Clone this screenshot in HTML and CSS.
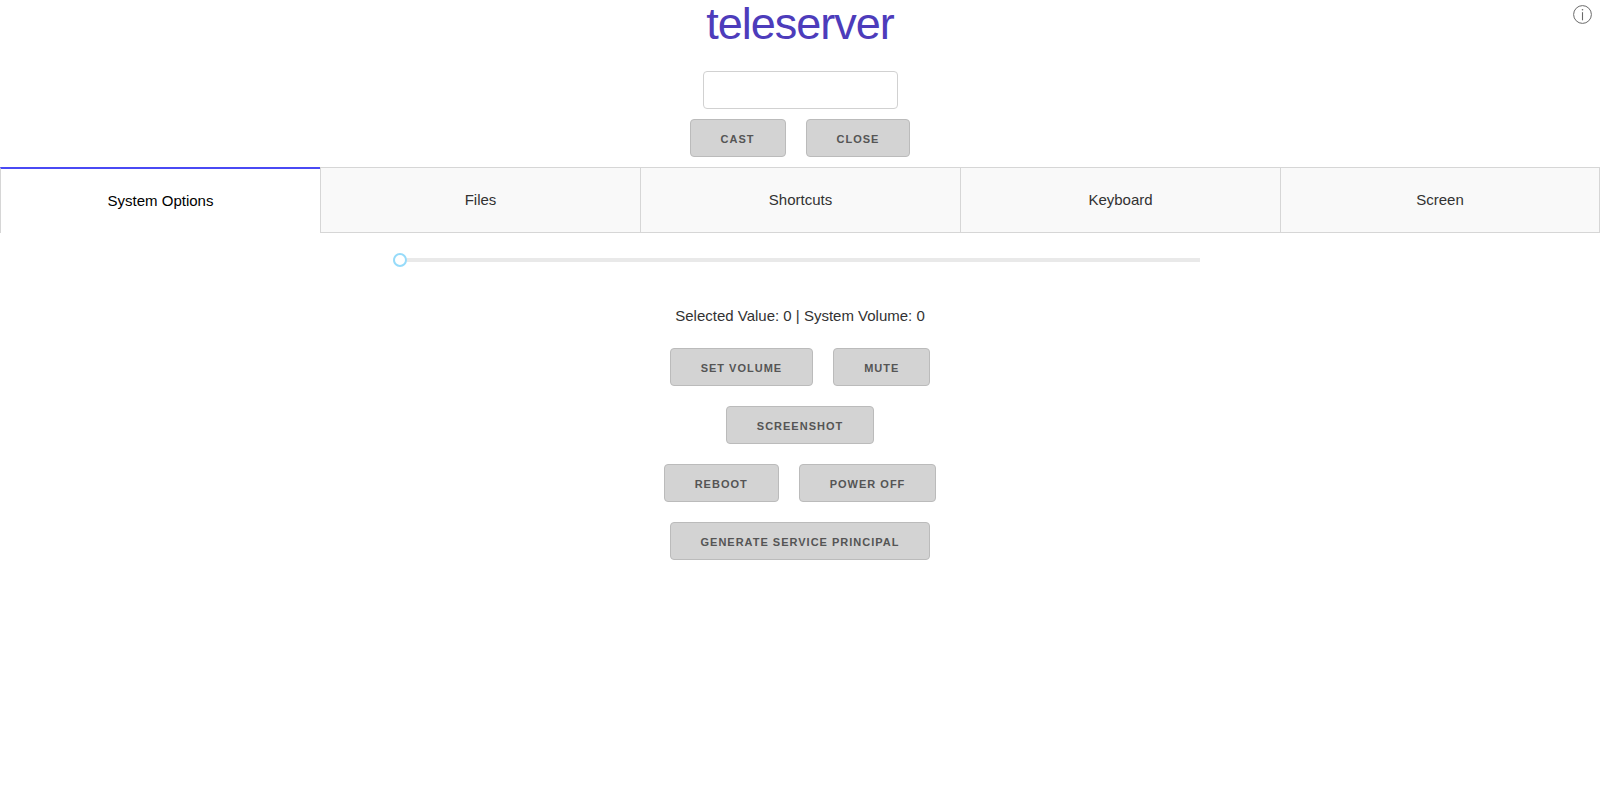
FILE: index.html
```html
<!DOCTYPE html>
<html lang="en">
<head>
<meta charset="utf-8">
<meta name="viewport" content="width=device-width, initial-scale=1">
<title>teleserver</title>
<link rel="stylesheet" href="styles.css">
</head>
<body>
<a class="info" href="#about" aria-label="About">
  <svg width="19" height="19" viewBox="0 0 19 19" fill="none" stroke="#6a6a6a" aria-hidden="true">
    <circle cx="9.5" cy="9.5" r="8.9"/>
    <path d="M9.5 7.2V15.3" stroke-width="1.1"/>
    <circle cx="9.5" cy="4.7" r="0.8" fill="#6a6a6a" stroke="none"/>
  </svg>
</a>
<header class="header">
  <h1 class="title">teleserver</h1>
  <input class="url" type="text" aria-label="Address to cast">
  <div class="row">
    <button class="button" type="button">CAST</button>
    <button class="button" type="button">CLOSE</button>
  </div>
</header>
<nav class="tabs" role="tablist">
  <button class="tab tab-selected" type="button" role="tab" aria-selected="true">System Options</button>
  <button class="tab" type="button" role="tab" aria-selected="false">Files</button>
  <button class="tab" type="button" role="tab" aria-selected="false">Shortcuts</button>
  <button class="tab" type="button" role="tab" aria-selected="false">Keyboard</button>
  <button class="tab" type="button" role="tab" aria-selected="false">Screen</button>
</nav>
<main class="panel">
  <div class="slider-box">
    <input class="slider" type="range" min="0" max="100" value="0" aria-label="Volume">
  </div>
  <p class="status">Selected Value: 0 | System Volume: 0</p>
  <div class="actions">
    <div class="row">
      <button class="button" type="button">SET VOLUME</button>
      <button class="button" type="button">MUTE</button>
    </div>
    <div class="row">
      <button class="button" type="button">SCREENSHOT</button>
    </div>
    <div class="row">
      <button class="button" type="button">REBOOT</button>
      <button class="button" type="button">POWER OFF</button>
    </div>
    <div class="row">
      <button class="button" type="button">GENERATE SERVICE PRINCIPAL</button>
    </div>
  </div>
</main>
</body>
</html>
```

FILE: styles.css
```css
* {
  box-sizing: border-box;
}

body {
  margin: 0;
  background: #fff;
  color: #323232;
  font-family: "Liberation Sans", Arial, sans-serif;
  font-size: 15px;
  line-height: 24px;
}

.info {
  position: absolute;
  top: 5px;
  right: 8px;
}

.info svg {
  display: block;
}

.header {
  display: flex;
  flex-direction: column;
  align-items: center;
  padding-bottom: 10px;
}

.title {
  margin: 0 0 23px;
  color: #4d3cbb;
  font-size: 45px;
  font-weight: 400;
  line-height: 48px;
  letter-spacing: -1px;
}

.url {
  width: 195px;
  height: 38px;
  margin-bottom: 10px;
  padding: 6px 10px;
  border: 1px solid #d1d1d1;
  border-radius: 4px;
  background: #fff;
  color: inherit;
  font: inherit;
}

.row {
  display: flex;
  justify-content: center;
  gap: 20px;
}

.button {
  height: 38px;
  padding: 0 30px;
  border: 1px solid #bbb;
  border-radius: 4px;
  background: #d3d3d3;
  color: #555;
  font-family: inherit;
  font-size: 11px;
  font-weight: 600;
  line-height: 38px;
  letter-spacing: 1px;
  white-space: nowrap;
}

.tabs {
  display: grid;
  grid-template-columns: repeat(5, 1fr);
}

.tab {
  height: 66px;
  padding: 0;
  border: 1px solid #d6d6d6;
  border-right: 0;
  background: #f9f9f9;
  color: #323232;
  font: inherit;
}

.tab:last-child {
  border-right: 1px solid #d6d6d6;
}

.tab-selected {
  border-top: 2px solid #4a4af4;
  border-bottom: 0;
  background: #fff;
  color: #000;
}

.slider-box {
  width: 50%;
  margin: 0 auto;
  padding-top: 20px;
}

.slider {
  display: block;
  width: calc(100% + 7px);
  height: 14px;
  margin: 0 0 0 -7px;
  appearance: none;
  background: transparent;
}

.slider::-webkit-slider-runnable-track {
  height: 4px;
  background: #e9e9e9;
}

.slider::-webkit-slider-thumb {
  width: 14px;
  height: 14px;
  margin-top: -5px;
  appearance: none;
  border: 2px solid #96dbfa;
  border-radius: 50%;
  background: #fff;
}

.status {
  margin: 37px 0 20px;
  text-align: center;
}

.actions {
  display: flex;
  flex-direction: column;
  gap: 20px;
}
```
